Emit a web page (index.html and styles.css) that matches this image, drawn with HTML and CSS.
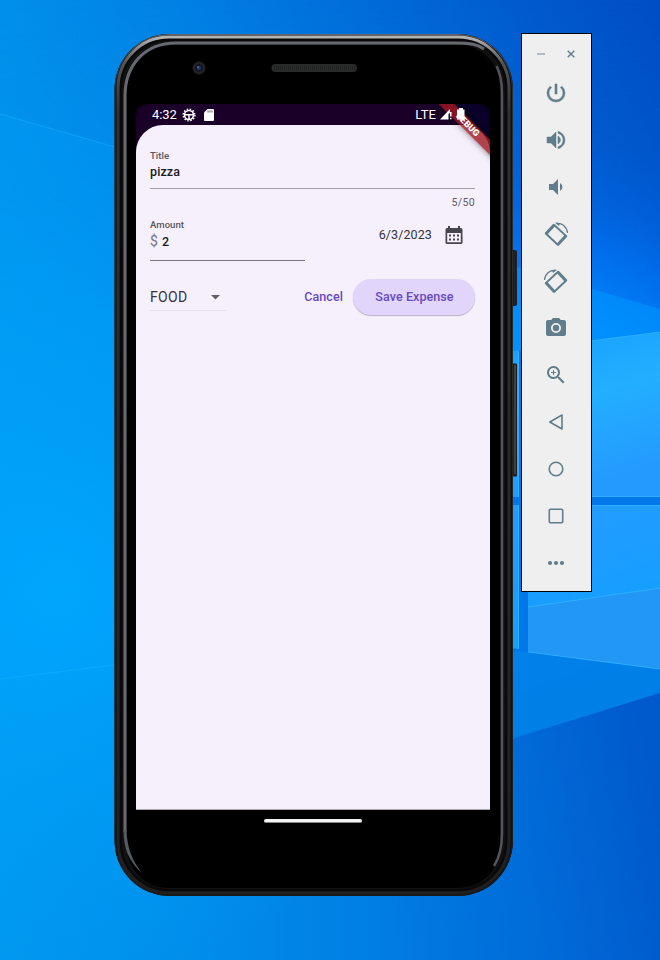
FILE: index.html
```html
<!DOCTYPE html>
<html lang="en">
<head>
<meta charset="utf-8">
<title>Expense</title>
<link rel="stylesheet" href="styles.css">
</head>
<body>
<svg class="wallpaper" viewBox="0 0 660 960" aria-hidden="true">
  <defs>
    <linearGradient id="base" x1="0" x2="1" y1="0" y2="0"><stop offset="0" stop-color="#0098f0"/><stop offset=".25" stop-color="#0090ec"/><stop offset=".6" stop-color="#007ce2"/><stop offset="1" stop-color="#005fd2"/></linearGradient>
    <linearGradient id="top" x1="0" x2="1" y1="0" y2="0"><stop offset="0" stop-color="#0070d8" stop-opacity=".2"/><stop offset=".3" stop-color="#0068d8" stop-opacity=".4"/><stop offset="1" stop-color="#0048c0" stop-opacity=".8"/></linearGradient>
    <radialGradient id="glow" gradientUnits="userSpaceOnUse" cx="540" cy="450" r="330"><stop offset="0" stop-color="#009cff"/><stop offset=".4" stop-color="#008cff" stop-opacity=".95"/><stop offset=".65" stop-color="#0072f5" stop-opacity=".65"/><stop offset="1" stop-color="#0055d0" stop-opacity="0"/></radialGradient>
    <radialGradient id="leftglow" gradientUnits="userSpaceOnUse" cx="60" cy="590" r="390"><stop offset="0" stop-color="#00a9ff" stop-opacity=".85"/><stop offset="1" stop-color="#00a0f8" stop-opacity="0"/></radialGradient>
    <linearGradient id="lower" gradientUnits="userSpaceOnUse" x1="380" x2="660" y1="860" y2="800"><stop offset="0" stop-color="#0074dd" stop-opacity="0"/><stop offset=".5" stop-color="#006cd8"/><stop offset="1" stop-color="#0055c6"/></linearGradient>
    <linearGradient id="pane" x1="0" x2=".3" y1="0" y2="1"><stop offset="0" stop-color="#149dff"/><stop offset=".5" stop-color="#22afff"/><stop offset="1" stop-color="#249aff"/></linearGradient>
    <linearGradient id="pane2" x1="0" x2=".3" y1="0" y2="1"><stop offset="0" stop-color="#269bff"/><stop offset="1" stop-color="#10a0ff"/></linearGradient>
    <linearGradient id="fade" x1="0" x2="0" y1="0" y2="1"><stop offset="0" stop-color="#fff"/><stop offset="1" stop-color="#000"/></linearGradient>
    <mask id="topfade"><rect width="660" height="330" fill="url(#fade)"/></mask>
  </defs>
  <rect width="660" height="960" fill="url(#base)"/>
  <rect width="660" height="330" fill="url(#top)" mask="url(#topfade)"/>
  <rect width="660" height="960" fill="url(#leftglow)"/>
  <path d="M0 114 115 147V665L0 679Z" fill="#00a6ff" opacity=".2"/>
  <path d="M0 114 115 147M0 679 115 665" stroke="#16b2ff" opacity=".55"/>
  <path d="M420 130H660V702L420 765Z" fill="url(#glow)"/>
  <path d="M500 262 660 309V340L500 352Z" fill="#0095ff" opacity=".6"/>
  <path d="M510 650 660 669V693L510 740Z" fill="#0082e8" opacity=".9"/>
  <path d="M380 779 660 693V960H380Z" fill="url(#lower)" opacity=".6"/>
  <path d="M500 350H528V652H500ZM500 497H660V505H500Z" fill="#0078ea"/>
  <path d="M500 352 519 350V497H500ZM528 349 660 332V497H528Z" fill="url(#pane)"/>
  <path d="M500 505H519V649L500 647ZM528 505H660V669L528 652Z" fill="url(#pane2)"/>
  <path d="M528 607 660 588V669L528 652Z" fill="#2397f6"/>
  <path d="M528 349 660 332M528 496.500H660M528 505.500H660M528 607 660 588M528 652 660 669M518.500 352V497M518.500 505V649" fill="none" stroke="#34b8ff" opacity=".7"/>
</svg>
<main class="desktop">
  <section class="phone">
    <svg class="shell" viewBox="0 0 406 866" aria-hidden="true">
      <defs>
        <linearGradient id="edge" x1="0" x2="0" y1="0" y2="1"><stop offset="0" stop-color="#656565"/><stop offset=".05" stop-color="#303030"/><stop offset="1" stop-color="#1b1b1b"/></linearGradient>
        <linearGradient id="bezel" x1="0" x2="0" y1="0" y2="1"><stop offset="0" stop-color="#b4b4b4"/><stop offset=".03" stop-color="#555"/><stop offset=".09" stop-color="#303030"/><stop offset="1" stop-color="#202020"/></linearGradient>
      </defs>
      <rect x="396" y="218" width="7" height="56" rx="2" fill="#202020"/>
      <rect x="396" y="331.500" width="7" height="113" rx="1" fill="#202020"/>
      <path d="M401 333V442" stroke="#65605c"/>
      <rect x=".5" y="2" width="398.500" height="862" rx="55" fill="#111"/>
      <rect x="1" y="2.500" width="397.500" height="861" rx="54.500" fill="none" stroke="url(#edge)"/>
      <rect x="4" y="5" width="391" height="856" rx="51" fill="none" stroke="url(#bezel)" stroke-width="3"/>
      <rect x="7" y="8" width="385" height="850" rx="48" fill="none" stroke="#090909" stroke-width="2"/>
      <rect x="13" y="13" width="373" height="843" rx="41" fill="#000"/>
      <path d="M11 800V64C11 33 31 11 62 11H340C357 11 364 12.500 370 17" fill="none" stroke="#666a70" stroke-width="3"/>
      <path d="M382.500 34C386 41 388 49 388 61V802C388 817 385 826 380 834" fill="none" stroke="#55555b" stroke-width="2.400"/>
      <path d="M9.500 798C9.500 815 14 829 28 841C17 827 13 814 12.500 798Z" fill="#555a60"/>
      <circle cx="85" cy="36" r="6.500" fill="#222"/><circle cx="85" cy="36" r="3.800" fill="#10152b"/><circle cx="85" cy="36" r="2" fill="#253665"/><circle cx="84" cy="35" r=".8" fill="#7890bb"/>
      <rect x="157.500" y="32" width="85.500" height="8" rx="4" fill="#292a2a"/><path d="M160 36H241" stroke="#222" stroke-width="4" stroke-dasharray="1 1"/>
    </svg>
    <div class="screen">
      <header class="status">
        <span class="time">4:32</span>
        <svg class="gear" viewBox="0 0 14 14"><circle cx="7" cy="7" r="4.500" fill="none" stroke="#fff" stroke-width="1.600"/><circle cx="7" cy="7" r="5.900" fill="none" stroke="#fff" stroke-width="1.400" stroke-dasharray="1.550 1.539"/><path d="M3 6.800H11M7 6.800V11" stroke="#fff" stroke-width="1.500"/></svg>
        <svg class="sd" viewBox="0 0 10 12"><path d="M3.500 0H9Q10 0 10 1V11Q10 12 9 12H1Q0 12 0 11V3.500Z" fill="#fff"/><path d="M4 1.500V3.500M6 1.500V3.500M8 1.500V3.500" stroke="#1a0028" stroke-width=".7"/></svg>
        <span class="network">LTE</span>
      </header>
      <form class="sheet">
        <div class="title-field">
          <label>Title</label><div class="value">pizza</div>
        </div>
        <div class="counter">5/50</div>
        <div class="details">
          <div class="amount-field"><label>Amount</label><div class="value"><span class="dollar">$</span>2</div></div>
          <div class="date"><span>6/3/2023</span>
            <svg viewBox="0 0 18 20"><path d="M3 1H5V3H13V1H15V3H16Q17.500 3 17.500 4.500V17.500Q17.500 19 16 19H2Q.5 19 .5 17.500V4.500Q.5 3 2 3H3Z" fill="#49454f"/><path d="M2.200 8H15.800V17.300H2.200Z" fill="#f6f0fd"/><path d="M4 9.500H6V11.500H4ZM8 9.500H10V11.500H8ZM12 9.500H14V11.500H12ZM4 13.500H6V15.500H4ZM8 13.500H10V15.500H8ZM12 13.500H14V15.500H12Z" fill="#49454f"/></svg>
          </div>
        </div>
        <div class="actions">
          <div class="dropdown"><span>FOOD</span><svg viewBox="0 0 9 5"><path d="M0 0H9L4.500 4.500Z" fill="#626065"/></svg></div>
          <span class="cancel">Cancel</span><span class="save">Save Expense</span>
        </div>
      </form>
      <svg class="corner" viewBox="0 0 50 50"><path d="M16 0H50V34Z" fill="#05002a" opacity=".75"/></svg>
      <div class="banner"><span>DEBUG</span></div>
      <svg class="signal" viewBox="0 0 28 14"><path d="M0 12.500 10 2V5.500L8.500 7V12.500Z" fill="#fff"/><path d="M10.800 5V9.500M10.800 10.800V12.300" stroke="#fff" stroke-width="1.500"/></svg>
      <svg class="battery" viewBox="0 0 10 13"><path d="M3 0H7V1.500H8.500V8.500L9 12 6 11 4.500 13V11.500H1V1.500H3Z" fill="#fff"/></svg>
    </div>
    <div class="home"></div>
  </section>
  <aside class="toolbar">
    <div class="window"><svg viewBox="0 0 8 8"><path d="M0 4H8" stroke="#9bacb3" stroke-width="1.500"/></svg><svg viewBox="0 0 8 8"><path d="M.7.7 7.300 7.300M7.300.7.700 7.300" stroke="#607d8b" stroke-width="1.400"/></svg></div>
    <div class="tool"><svg viewBox="0 0 24 24"><path stroke="#607d8b" stroke-width=".6" d="M13 3h-2v10h2zm4.830 2.170-1.420 1.420A7 7 0 1 1 7.580 6.580L6.170 5.170A9 9 0 1 0 17.830 5.170z"/></svg></div>
    <div class="tool"><svg viewBox="0 0 24 24"><path stroke="#607d8b" stroke-width=".5" d="M3 9v6h4l5 5V4L7 9zm13.500 3A4.500 4.500 0 0 0 14 7.970v8.050A4.500 4.500 0 0 0 16.500 12zM14 3.230v2.060a7 7 0 0 1 0 13.420v2.060a9 9 0 0 0 0-17.540z"/></svg></div>
    <div class="tool"><svg viewBox="0 0 24 24"><path d="M18.500 12A4.500 4.500 0 0 0 16 7.970v8.050A4.500 4.500 0 0 0 18.500 12zM5 9v6h4l5 5V4L9 9z"/></svg></div>
    <div class="tool"><svg viewBox="0 0 24 24"><path fill-rule="evenodd" transform="translate(12 12.800) rotate(43)" d="M-8 -7H8Q9.500 -7 9.500 -5.500V5.500Q9.500 7 8 7H-8Q-9.500 7 -9.500 5.500V-5.500Q-9.500 -7 -8 -7ZM-6.500 -5V5H6.500V-5Z"/><path d="M12 1.400C18 .6 22.800 4.500 23.600 11" fill="none" stroke="#607d8b" stroke-width="1.300"/><path d="M11 .8 16 1 15 4Z"/></svg></div>
    <div class="tool"><svg class="mirror" viewBox="0 0 24 24"><path fill-rule="evenodd" transform="translate(12 12.800) rotate(43)" d="M-8 -7H8Q9.500 -7 9.500 -5.500V5.500Q9.500 7 8 7H-8Q-9.500 7 -9.500 5.500V-5.500Q-9.500 -7 -8 -7ZM-6.500 -5V5H6.500V-5Z"/><path d="M12 1.400C18 .6 22.800 4.500 23.600 11" fill="none" stroke="#607d8b" stroke-width="1.300"/><path d="M11 .8 16 1 15 4Z"/></svg></div>
    <div class="tool"><svg viewBox="0 0 24 24"><circle cx="12" cy="12" r="3.200"/><path d="M9 2 7.170 4H4a2 2 0 0 0-2 2v12c0 1.100.9 2 2 2h16a2 2 0 0 0 2-2V6a2 2 0 0 0-2-2h-3.170L15 2zm3 15a5 5 0 1 1 0-10 5 5 0 0 1 0 10z"/></svg></div>
    <div class="tool"><svg viewBox="0 0 24 24"><path d="M15.500 14h-.79l-.28-.27A6.500 6.500 0 1 0 13.730 14.430l.27.280v.790l5 4.990L20.490 19zm-6 0a4.500 4.500 0 1 1 0-9 4.500 4.500 0 0 1 0 9zm2.500-4h-2v2H9v-2H7V9h2V7h1v2h2z"/></svg></div>
    <div class="tool"><svg class="outline" viewBox="0 0 24 24"><path d="M18 5V19L5.800 12Z"/></svg></div>
    <div class="tool"><svg class="outline" viewBox="0 0 24 24"><circle cx="12" cy="12" r="6.800"/></svg></div>
    <div class="tool"><svg class="outline" viewBox="0 0 24 24"><rect x="5.300" y="5.300" width="13.400" height="13.400" rx="1"/></svg></div>
    <div class="tool"><svg viewBox="0 0 24 24"><circle cx="6" cy="12" r="2.100"/><circle cx="12" cy="12" r="2.100"/><circle cx="18" cy="12" r="2.100"/></svg></div>
  </aside>
</main>
</body>
</html>
```
FILE: styles.css
```css
* { box-sizing: border-box; }
body { margin: 0; width: 660px; height: 960px; overflow: hidden; font-family: Roboto, sans-serif; color: #1d1b20; }
.wallpaper { position: absolute; inset: 0; width: 660px; height: 960px; z-index: -1; }
.desktop { display: flex; align-items: flex-start; padding: 32px 0 0 114px; }
.phone { position: relative; width: 407px; height: 866px; padding: 72px 0 0 22px; }
.shell { position: absolute; left: 0; top: 0; width: 406px; height: 866px; }
.screen { position: relative; width: 354px; height: 706px; overflow: hidden; background: #1a0028; border-radius: 12px 12px 0 0; border-bottom: 1px solid #aaa7af; }
.status { display: flex; height: 21px; align-items: center; color: #fff; padding: 0 54px 0 16px; }
.time { width: 30px; font-size: 13px; letter-spacing: -.1px; }
.gear { width: 14px; height: 14px; }
.sd { width: 10px; height: 12px; margin-left: 8px; }
.network { margin-left: auto; font-size: 13px; letter-spacing: .1px; }
.signal { position: absolute; left: 304px; top: 3px; width: 28px; height: 14px; }
.sheet { height: 684px; padding: 24px 15px 0 14px; background: #f6f0fd; border-radius: 27px 27px 0 0; }
label { display: block; height: 14px; line-height: 14px; font-size: 9.600px; font-weight: 500; color: #5a5660; }
.value { height: 16px; line-height: 17px; font-size: 12.500px; font-weight: 500; letter-spacing: .1px; }
.title-field { height: 40px; border-bottom: 1px solid #a59fac; }
.counter { height: 29px; line-height: 27px; text-align: right; font-size: 10.500px; letter-spacing: .35px; color: #605c66; }
.details { display: flex; justify-content: space-between; height: 43px; }
.amount-field { width: 155px; height: 43px; border-bottom: 1px solid #79747e; }
.amount-field .value { line-height: 18px; }
.dollar { margin-right: 4px; font-size: 14px; font-weight: 400; color: #77737b; }
.date { display: flex; height: 34px; align-items: center; padding-right: 12px; font-size: 12.500px; letter-spacing: .1px; color: #35323a; }
.date span { padding-bottom: 1px; }
.date svg { width: 18px; height: 20px; margin-left: 13px; }
.actions { display: flex; align-items: center; height: 36px; margin-top: 18px; }
.dropdown { display: flex; align-items: center; justify-content: space-between; width: 76px; height: 27px; margin-top: 1px; padding: 0 6px 0 0; border-bottom: 1px solid #e7e0ec; font-size: 14px; letter-spacing: .3px; color: #35323a; }
.dropdown svg { width: 9px; height: 5px; }
.cancel { margin: 0 0 1px auto; color: #6849bf; font-size: 12.500px; font-weight: 500; letter-spacing: .08px; }
.save { width: 122px; height: 36px; margin-left: 10px; border-radius: 18px; background: #e1d5fb; box-shadow: 0 1px 1px #b7b1c2; color: #6849bf; text-align: center; text-indent: 1px; font-size: 12.500px; font-weight: 500; letter-spacing: .08px; line-height: 36px; }
.corner { position: absolute; right: 0; top: 0; width: 50px; height: 50px; }
.banner { position: absolute; top: 14px; right: -31px; width: 110px; height: 11px; transform: rotate(45deg); background: rgba(160, 24, 31, .8); box-shadow: 0 0 6px #00000080; color: #fff; text-align: center; text-indent: 4px; font-size: 9px; font-weight: 900; line-height: 11px; }
.battery { position: absolute; left: 320px; top: 4px; width: 10px; height: 13px; }
.home { position: relative; width: 98px; height: 4px; margin: 9px 0 0 128px; border-radius: 2px; background: #f4f4f4; border-bottom: 1px solid #858585; }
.toolbar { width: 71px; height: 559px; margin-top: 1px; padding: 11px 1px 0 0; background: #efefef; border: 1px solid #000; }
.window { display: flex; justify-content: center; gap: 22px; height: 24px; align-items: center; padding-bottom: 6px; }
.window svg { width: 8px; height: 8px; }
.tool { display: flex; height: 47px; align-items: center; justify-content: center; }
.tool svg { width: 24px; height: 24px; fill: #607d8b; }
.tool .outline { fill: none; stroke: #607d8b; stroke-width: 1.600; stroke-linejoin: round; }
.tool .mirror { transform: scaleX(-1); }
```
